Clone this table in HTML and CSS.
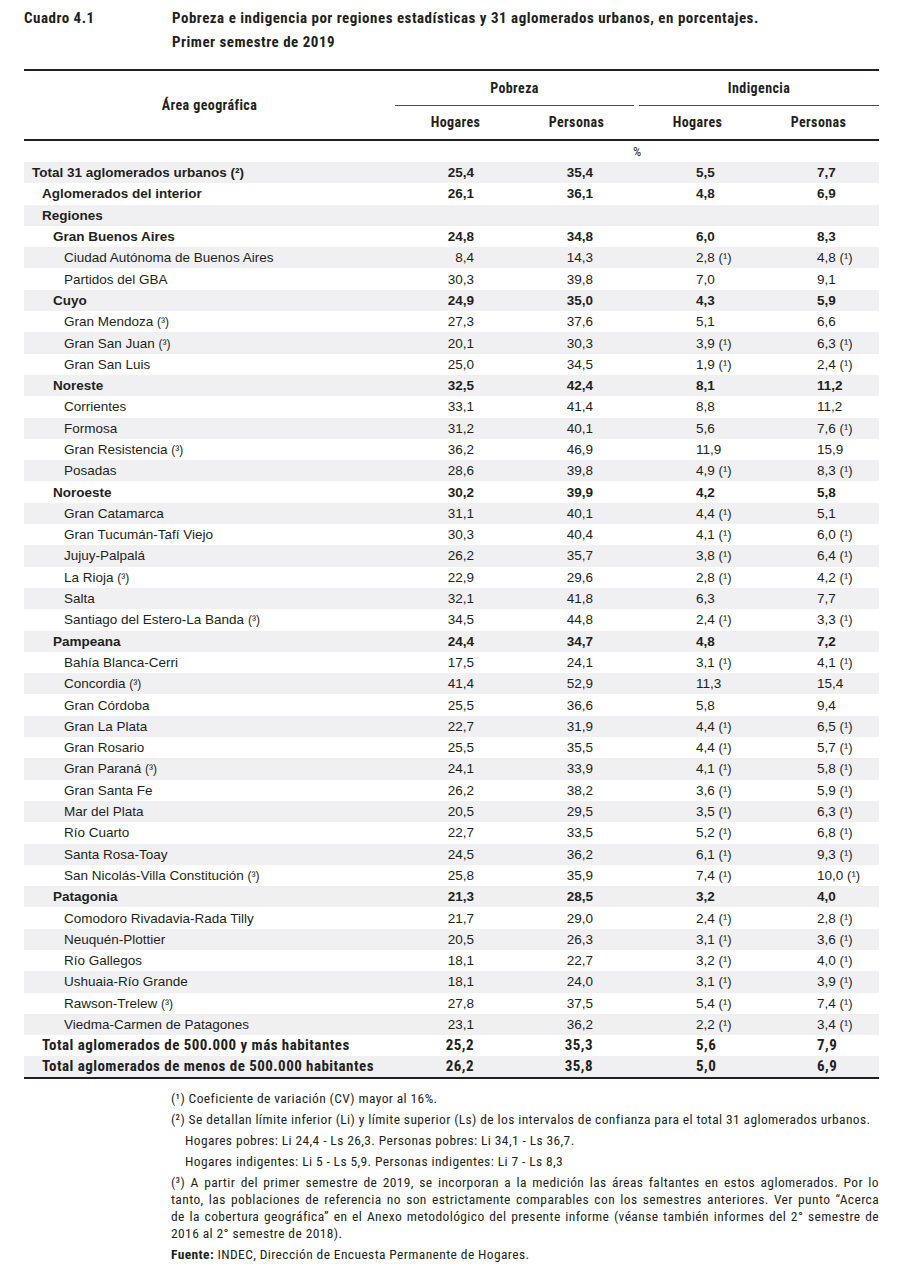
FILE: index.html
```html
<!DOCTYPE html>
<html lang="es">
<head>
<meta charset="utf-8">
<title>Cuadro 4.1</title>
<link rel="stylesheet" href="styles.css">
</head>
<body>
<div class="page">
  <header class="title">
    <div class="num">Cuadro 4.1</div>
    <div class="text">Pobreza e indigencia por regiones estadísticas y 31 aglomerados urbanos, en porcentajes.<br>Primer semestre de 2019</div>
  </header>

  <table class="data">
    <colgroup>
      <col class="c-area"><col class="c-num"><col class="c-num"><col class="c-num"><col class="c-num">
    </colgroup>
    <thead>
      <tr class="h1">
        <th rowspan="2" class="area">Área geográfica</th>
        <th colspan="2" class="grp"><div class="grp-label pob">Pobreza</div></th>
        <th colspan="2" class="grp"><div class="grp-label ind">Indigencia</div></th>
      </tr>
      <tr class="h2">
        <th>Hogares</th><th>Personas</th><th>Hogares</th><th>Personas</th>
      </tr>
    </thead>
    <tbody>
      <tr class="unit"><td></td><td colspan="4" class="pct">%</td></tr>
    </tbody>
    <tbody class="rows">
      <tr class="b"><td class="l l0">Total 31 aglomerados urbanos (²)</td><td class="n1">25,4</td><td class="n2">35,4</td><td class="n3">5,5</td><td class="n4">7,7</td></tr>
      <tr class="b"><td class="l l1">Aglomerados del interior</td><td class="n1">26,1</td><td class="n2">36,1</td><td class="n3">4,8</td><td class="n4">6,9</td></tr>
      <tr class="b"><td class="l l1">Regiones</td><td class="n1"></td><td class="n2"></td><td class="n3"></td><td class="n4"></td></tr>
      <tr class="b"><td class="l l2">Gran Buenos Aires</td><td class="n1">24,8</td><td class="n2">34,8</td><td class="n3">6,0</td><td class="n4">8,3</td></tr>
      <tr><td class="l l3">Ciudad Autónoma de Buenos Aires</td><td class="n1">8,4</td><td class="n2">14,3</td><td class="n3">2,8 <span class="fn">(¹)</span></td><td class="n4">4,8 <span class="fn">(¹)</span></td></tr>
      <tr><td class="l l3">Partidos del GBA</td><td class="n1">30,3</td><td class="n2">39,8</td><td class="n3">7,0</td><td class="n4">9,1</td></tr>
      <tr class="b"><td class="l l2">Cuyo</td><td class="n1">24,9</td><td class="n2">35,0</td><td class="n3">4,3</td><td class="n4">5,9</td></tr>
      <tr><td class="l l3">Gran Mendoza <span class="lfn">(³)</span></td><td class="n1">27,3</td><td class="n2">37,6</td><td class="n3">5,1</td><td class="n4">6,6</td></tr>
      <tr><td class="l l3">Gran San Juan <span class="lfn">(³)</span></td><td class="n1">20,1</td><td class="n2">30,3</td><td class="n3">3,9 <span class="fn">(¹)</span></td><td class="n4">6,3 <span class="fn">(¹)</span></td></tr>
      <tr><td class="l l3">Gran San Luis</td><td class="n1">25,0</td><td class="n2">34,5</td><td class="n3">1,9 <span class="fn">(¹)</span></td><td class="n4">2,4 <span class="fn">(¹)</span></td></tr>
      <tr class="b"><td class="l l2">Noreste</td><td class="n1">32,5</td><td class="n2">42,4</td><td class="n3">8,1</td><td class="n4">11,2</td></tr>
      <tr><td class="l l3">Corrientes</td><td class="n1">33,1</td><td class="n2">41,4</td><td class="n3">8,8</td><td class="n4">11,2</td></tr>
      <tr><td class="l l3">Formosa</td><td class="n1">31,2</td><td class="n2">40,1</td><td class="n3">5,6</td><td class="n4">7,6 <span class="fn">(¹)</span></td></tr>
      <tr><td class="l l3">Gran Resistencia <span class="lfn">(³)</span></td><td class="n1">36,2</td><td class="n2">46,9</td><td class="n3">11,9</td><td class="n4">15,9</td></tr>
      <tr><td class="l l3">Posadas</td><td class="n1">28,6</td><td class="n2">39,8</td><td class="n3">4,9 <span class="fn">(¹)</span></td><td class="n4">8,3 <span class="fn">(¹)</span></td></tr>
      <tr class="b"><td class="l l2">Noroeste</td><td class="n1">30,2</td><td class="n2">39,9</td><td class="n3">4,2</td><td class="n4">5,8</td></tr>
      <tr><td class="l l3">Gran Catamarca</td><td class="n1">31,1</td><td class="n2">40,1</td><td class="n3">4,4 <span class="fn">(¹)</span></td><td class="n4">5,1</td></tr>
      <tr><td class="l l3">Gran Tucumán-Tafí Viejo</td><td class="n1">30,3</td><td class="n2">40,4</td><td class="n3">4,1 <span class="fn">(¹)</span></td><td class="n4">6,0 <span class="fn">(¹)</span></td></tr>
      <tr><td class="l l3">Jujuy-Palpalá</td><td class="n1">26,2</td><td class="n2">35,7</td><td class="n3">3,8 <span class="fn">(¹)</span></td><td class="n4">6,4 <span class="fn">(¹)</span></td></tr>
      <tr><td class="l l3">La Rioja <span class="lfn">(³)</span></td><td class="n1">22,9</td><td class="n2">29,6</td><td class="n3">2,8 <span class="fn">(¹)</span></td><td class="n4">4,2 <span class="fn">(¹)</span></td></tr>
      <tr><td class="l l3">Salta</td><td class="n1">32,1</td><td class="n2">41,8</td><td class="n3">6,3</td><td class="n4">7,7</td></tr>
      <tr><td class="l l3">Santiago del Estero-La Banda <span class="lfn">(³)</span></td><td class="n1">34,5</td><td class="n2">44,8</td><td class="n3">2,4 <span class="fn">(¹)</span></td><td class="n4">3,3 <span class="fn">(¹)</span></td></tr>
      <tr class="b"><td class="l l2">Pampeana</td><td class="n1">24,4</td><td class="n2">34,7</td><td class="n3">4,8</td><td class="n4">7,2</td></tr>
      <tr><td class="l l3">Bahía Blanca-Cerri</td><td class="n1">17,5</td><td class="n2">24,1</td><td class="n3">3,1 <span class="fn">(¹)</span></td><td class="n4">4,1 <span class="fn">(¹)</span></td></tr>
      <tr><td class="l l3">Concordia <span class="lfn">(³)</span></td><td class="n1">41,4</td><td class="n2">52,9</td><td class="n3">11,3</td><td class="n4">15,4</td></tr>
      <tr><td class="l l3">Gran Córdoba</td><td class="n1">25,5</td><td class="n2">36,6</td><td class="n3">5,8</td><td class="n4">9,4</td></tr>
      <tr><td class="l l3">Gran La Plata</td><td class="n1">22,7</td><td class="n2">31,9</td><td class="n3">4,4 <span class="fn">(¹)</span></td><td class="n4">6,5 <span class="fn">(¹)</span></td></tr>
      <tr><td class="l l3">Gran Rosario</td><td class="n1">25,5</td><td class="n2">35,5</td><td class="n3">4,4 <span class="fn">(¹)</span></td><td class="n4">5,7 <span class="fn">(¹)</span></td></tr>
      <tr><td class="l l3">Gran Paraná <span class="lfn">(³)</span></td><td class="n1">24,1</td><td class="n2">33,9</td><td class="n3">4,1 <span class="fn">(¹)</span></td><td class="n4">5,8 <span class="fn">(¹)</span></td></tr>
      <tr><td class="l l3">Gran Santa Fe</td><td class="n1">26,2</td><td class="n2">38,2</td><td class="n3">3,6 <span class="fn">(¹)</span></td><td class="n4">5,9 <span class="fn">(¹)</span></td></tr>
      <tr><td class="l l3">Mar del Plata</td><td class="n1">20,5</td><td class="n2">29,5</td><td class="n3">3,5 <span class="fn">(¹)</span></td><td class="n4">6,3 <span class="fn">(¹)</span></td></tr>
      <tr><td class="l l3">Río Cuarto</td><td class="n1">22,7</td><td class="n2">33,5</td><td class="n3">5,2 <span class="fn">(¹)</span></td><td class="n4">6,8 <span class="fn">(¹)</span></td></tr>
      <tr><td class="l l3">Santa Rosa-Toay</td><td class="n1">24,5</td><td class="n2">36,2</td><td class="n3">6,1 <span class="fn">(¹)</span></td><td class="n4">9,3 <span class="fn">(¹)</span></td></tr>
      <tr><td class="l l3">San Nicolás-Villa Constitución <span class="lfn">(³)</span></td><td class="n1">25,8</td><td class="n2">35,9</td><td class="n3">7,4 <span class="fn">(¹)</span></td><td class="n4">10,0 <span class="fn">(¹)</span></td></tr>
      <tr class="b"><td class="l l2">Patagonia</td><td class="n1">21,3</td><td class="n2">28,5</td><td class="n3">3,2</td><td class="n4">4,0</td></tr>
      <tr><td class="l l3">Comodoro Rivadavia-Rada Tilly</td><td class="n1">21,7</td><td class="n2">29,0</td><td class="n3">2,4 <span class="fn">(¹)</span></td><td class="n4">2,8 <span class="fn">(¹)</span></td></tr>
      <tr><td class="l l3">Neuquén-Plottier</td><td class="n1">20,5</td><td class="n2">26,3</td><td class="n3">3,1 <span class="fn">(¹)</span></td><td class="n4">3,6 <span class="fn">(¹)</span></td></tr>
      <tr><td class="l l3">Río Gallegos</td><td class="n1">18,1</td><td class="n2">22,7</td><td class="n3">3,2 <span class="fn">(¹)</span></td><td class="n4">4,0 <span class="fn">(¹)</span></td></tr>
      <tr><td class="l l3">Ushuaia-Río Grande</td><td class="n1">18,1</td><td class="n2">24,0</td><td class="n3">3,1 <span class="fn">(¹)</span></td><td class="n4">3,9 <span class="fn">(¹)</span></td></tr>
      <tr><td class="l l3">Rawson-Trelew <span class="lfn">(³)</span></td><td class="n1">27,8</td><td class="n2">37,5</td><td class="n3">5,4 <span class="fn">(¹)</span></td><td class="n4">7,4 <span class="fn">(¹)</span></td></tr>
      <tr><td class="l l3">Viedma-Carmen de Patagones</td><td class="n1">23,1</td><td class="n2">36,2</td><td class="n3">2,2 <span class="fn">(¹)</span></td><td class="n4">3,4 <span class="fn">(¹)</span></td></tr>
      <tr class="tot"><td class="l l1">Total aglomerados de 500.000 y más habitantes</td><td class="n1">25,2</td><td class="n2">35,3</td><td class="n3">5,6</td><td class="n4">7,9</td></tr>
      <tr class="tot"><td class="l l1">Total aglomerados de menos de 500.000 habitantes</td><td class="n1">26,2</td><td class="n2">35,8</td><td class="n3">5,0</td><td class="n4">6,9</td></tr>
    </tbody>
  </table>

  <section class="notes">
    <p class="note">(¹) Coeficiente de variación (CV) mayor al 16%.</p>
    <p class="note">(²) Se detallan límite inferior (Li) y límite superior (Ls) de los intervalos de confianza para el total 31 aglomerados urbanos.</p>
    <p class="note sub">Hogares pobres: Li 24,4 - Ls 26,3. Personas pobres: Li 34,1 - Ls 36,7.</p>
    <p class="note sub">Hogares indigentes: Li 5 - Ls 5,9. Personas indigentes: Li 7 - Ls 8,3</p>
    <p class="note para">
      <span class="ln">(³) A partir del primer semestre de 2019, se incorporan a la medición las áreas faltantes en estos aglomerados. Por lo</span>
      <span class="ln">tanto, las poblaciones de referencia no son estrictamente comparables con los semestres anteriores. Ver punto “Acerca</span>
      <span class="ln">de la cobertura geográfica” en el Anexo metodológico del presente informe (véanse también informes del 2° semestre de</span>
      <span class="ln last">2016 al 2° semestre de 2018).</span>
    </p>
    <p class="note source"><b>Fuente:</b> INDEC, Dirección de Encuesta Permanente de Hogares.</p>
  </section>
</div>
</body>
</html>
```

FILE: styles.css
```css
* { box-sizing: border-box; }

html, body {
  margin: 0;
  background: #ffffff;
}

body {
  font-family: "Liberation Sans", Arial, sans-serif;
  color: #231f20;
}

.page {
  width: 906px;
  padding: 6px 28px 0 24px;
}

.title,
.data thead,
.pct,
.tot td,
.notes {
  font-family: Roboto, "Liberation Sans", sans-serif;
  font-stretch: 75%;
}

/* ---- title ---- */
.title {
  display: grid;
  grid-template-columns: 148px 1fr;
  font-weight: bold;
  font-size: 15px;
  letter-spacing: 0.5px;
  line-height: 24px;
}

/* ---- table ---- */
.data {
  margin-top: 15px;
  width: 854px;
  border-collapse: collapse;
  table-layout: fixed;
}

.c-area { width: 371px; }
.c-num { width: 121px; }

.data thead th {
  font-weight: bold;
  font-size: 14px;
  letter-spacing: 0.4px;
  padding: 0;
  text-align: center;
  vertical-align: middle;
}

.data thead .h1 th {
  border-top: 2px solid #231f20;
}

.data thead .h1 .grp {
  height: 35px;
  vertical-align: top;
}

.grp-label {
  height: 35px;
  line-height: 34px;
  border-bottom: 1.5px solid #4a4a4a;
}

.grp-label.pob { margin-right: 3px; }
.grp-label.ind { margin-left: 2px; }

.data thead .h2 th {
  height: 34px;
  border-bottom: 2px solid #231f20;
  padding-bottom: 1px;
}

.data thead .area {
  border-bottom: 2px solid #231f20;
}

.unit td {
  height: 21px;
  padding: 0;
}

.pct {
  text-align: center;
  font-size: 13px;
  line-height: 21px;
  padding-right: 4px;
}

.rows tr {
  height: 21.3px;
}

.rows tr:nth-child(odd) td {
  background: #f0f0f2;
}

.rows td {
  padding: 0;
  font-size: 13.5px;
  line-height: 21px;
  white-space: nowrap;
}

.rows tr.b td {
  font-weight: bold;
}

.rows tr.tot td {
  font-weight: bold;
  font-size: 15px;
  letter-spacing: 0.45px;
}

.rows tr:last-child td {
  border-bottom: 2.5px solid #231f20;
}

.l0 { padding-left: 8px !important; }
.l1 { padding-left: 18px !important; }
.l2 { padding-left: 29px !important; }
.l3 { padding-left: 40px !important; }

.n1 { text-align: right; padding-right: 42px !important; }
.n2 { text-align: right; padding-right: 44px !important; }
.n3 { text-align: left; padding-left: 59px !important; }
.n4 { text-align: left; padding-left: 59px !important; }

.fn {
  font-size: 13px;
  line-height: 1;
}

.lfn {
  font-size: 12px;
  line-height: 1;
}

/* ---- notes ---- */
.notes {
  margin-left: 147px;
  width: 708px;
  padding-top: 9px;
  font-size: 13.5px;
  letter-spacing: 0.38px;
  color: #231f20;
}

.note {
  margin: 0;
  line-height: 21px;
}

.note.sub {
  padding-left: 14px;
}

.note.para {
  line-height: 17px;
  margin-top: 2px;
}

.ln {
  display: block;
  text-align: justify;
  text-align-last: justify;
}

.ln.last {
  text-align-last: left;
}

.note.source {
  margin-top: 2px;
}
```
